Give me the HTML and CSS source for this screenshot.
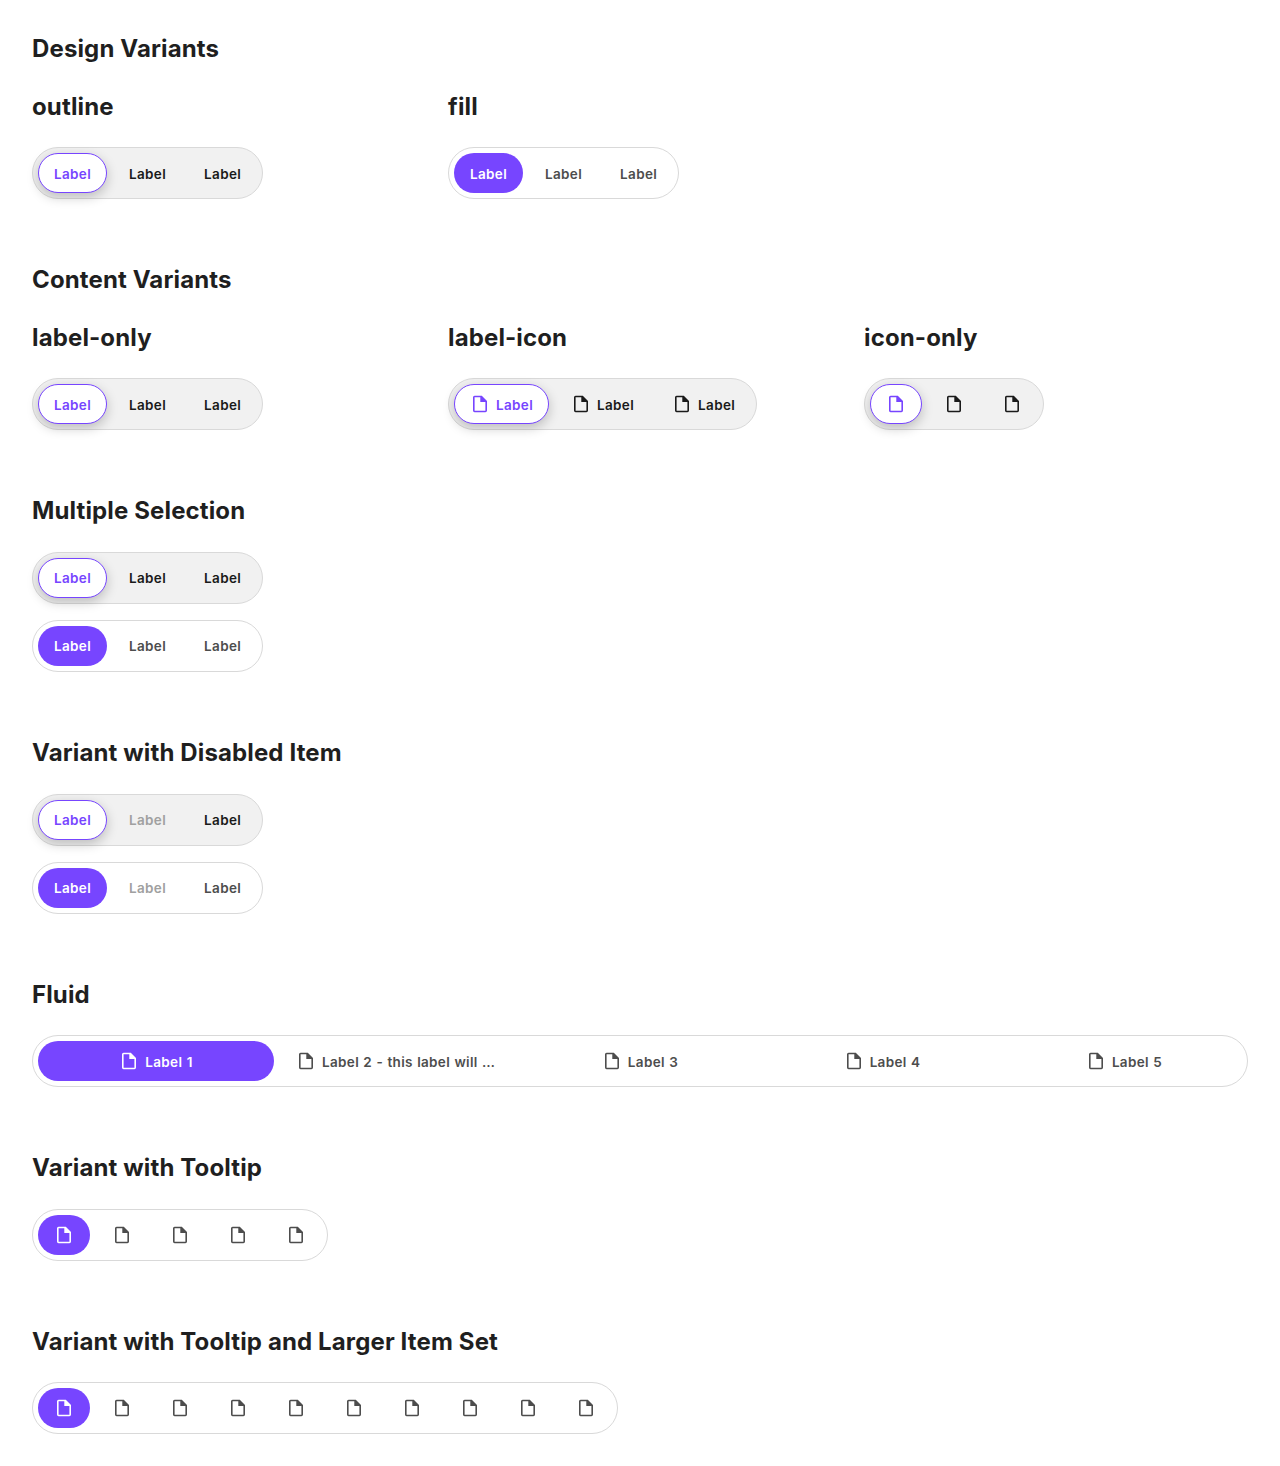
FILE: index.html
```html
<!DOCTYPE html>
<html lang="en">
<head>
<meta charset="utf-8">
<title>Segmented Control</title>
<link rel="stylesheet" href="styles.css">
</head>
<body>
<main id="page"></main>
<script src="script.js"></script>
</body>
</html>
```

FILE: styles.css
```css
* { box-sizing: border-box; }
body { margin: 0; background: #fff; color: #1f1f1f; font-family: Inter, "Liberation Sans", sans-serif; }
main { padding: 32px; }
h2 { margin: 0; font-size: 24px; line-height: 33.6px; font-weight: 700; letter-spacing: .13px; }
section { margin-bottom: 64px; }
section:last-child { margin-bottom: 0; }
section > h2 { margin-bottom: 24px; }
.grid { display: grid; grid-template-columns: repeat(3, 384px); column-gap: 32px; }
.grid h2 { margin-bottom: 24px; }
.stack { display: flex; flex-direction: column; align-items: flex-start; gap: 16px; }
.segments { display: inline-flex; gap: 6px; height: 52px; padding: 5px; border: 1px solid #d9d9d9; border-radius: 26px; vertical-align: top; }
.segments.outline { background: #f1f1f1; color: #1a1a1a; }
.segments.fill { background: #fff; color: #4d4d4d; }
.item { display: flex; align-items: center; justify-content: center; gap: 6px; height: 40px; padding: 0 15px; border: 1px solid transparent; border-radius: 20px; background: none; color: inherit; font: 600 13.5px/20px Inter, "Liberation Sans", sans-serif; letter-spacing: .34px; word-spacing: .6px; white-space: nowrap; }
.item span { padding-top: .8px; }
.item svg { flex: none; width: 20px; height: 20px; fill: currentColor; }
.item:disabled { color: #a0a0a0; }
.outline .selected { background: #fff; border-color: #7745ff; color: #7745ff; box-shadow: 0 4px 12px rgba(0, 0, 0, .22); }
.fill .selected { background: #7745ff; color: #fff; }
.fluid { display: grid; grid-template-columns: repeat(5, minmax(0, 1fr)); }
.fluid .item span { overflow: hidden; text-overflow: ellipsis; }
```

FILE: script.js
```js
const icon = '<svg viewBox="0 0 20 20"><path fill-rule="evenodd" d="M4.6 1.7H11.8L17 6.9V16.6a1.6 1.6 0 0 1-1.6 1.6H4.6a1.6 1.6 0 0 1-1.6-1.6V3.3a1.6 1.6 0 0 1 1.6-1.6zM4.6 3.2v13.5h10.8V7.9H10.3V3.2z"/></svg>';
function segments(style, labels, icons = false, disabled = -1) {
  return `<div class="segments ${style}">` + labels.map((label, i) =>
    `<button class="item${i ? '' : ' selected'}"${i === disabled ? ' disabled' : ''}>${icons ? icon : ''}${label ? `<span>${label}</span>` : ''}</button>`).join('') + '</div>';
}
const three = ['Label', 'Label', 'Label'];
const section = (title, body) => `<section><h2>${title}</h2>${body}</section>`;
const column = (title, body) => `<div><h2>${title}</h2>${body}</div>`;
const grid = body => `<div class="grid">${body}</div>`;
const stack = body => `<div class="stack">${body}</div>`;
document.getElementById('page').innerHTML =
  section('Design Variants', grid(column('outline', segments('outline', three)) + column('fill', segments('fill', three)))) +
  section('Content Variants', grid(column('label-only', segments('outline', three)) + column('label-icon', segments('outline', three, true)) + column('icon-only', segments('outline', ['', '', ''], true)))) +
  section('Multiple Selection', stack(segments('outline', three) + segments('fill', three))) +
  section('Variant with Disabled Item', stack(segments('outline', three, false, 1) + segments('fill', three, false, 1))) +
  section('Fluid', segments('fill fluid', ['Label 1', 'Label 2 - this label will be truncated', 'Label 3', 'Label 4', 'Label 5'], true)) +
  section('Variant with Tooltip', segments('fill', Array(5).fill(''), true)) +
  section('Variant with Tooltip and Larger Item Set', segments('fill', Array(10).fill(''), true));
```
